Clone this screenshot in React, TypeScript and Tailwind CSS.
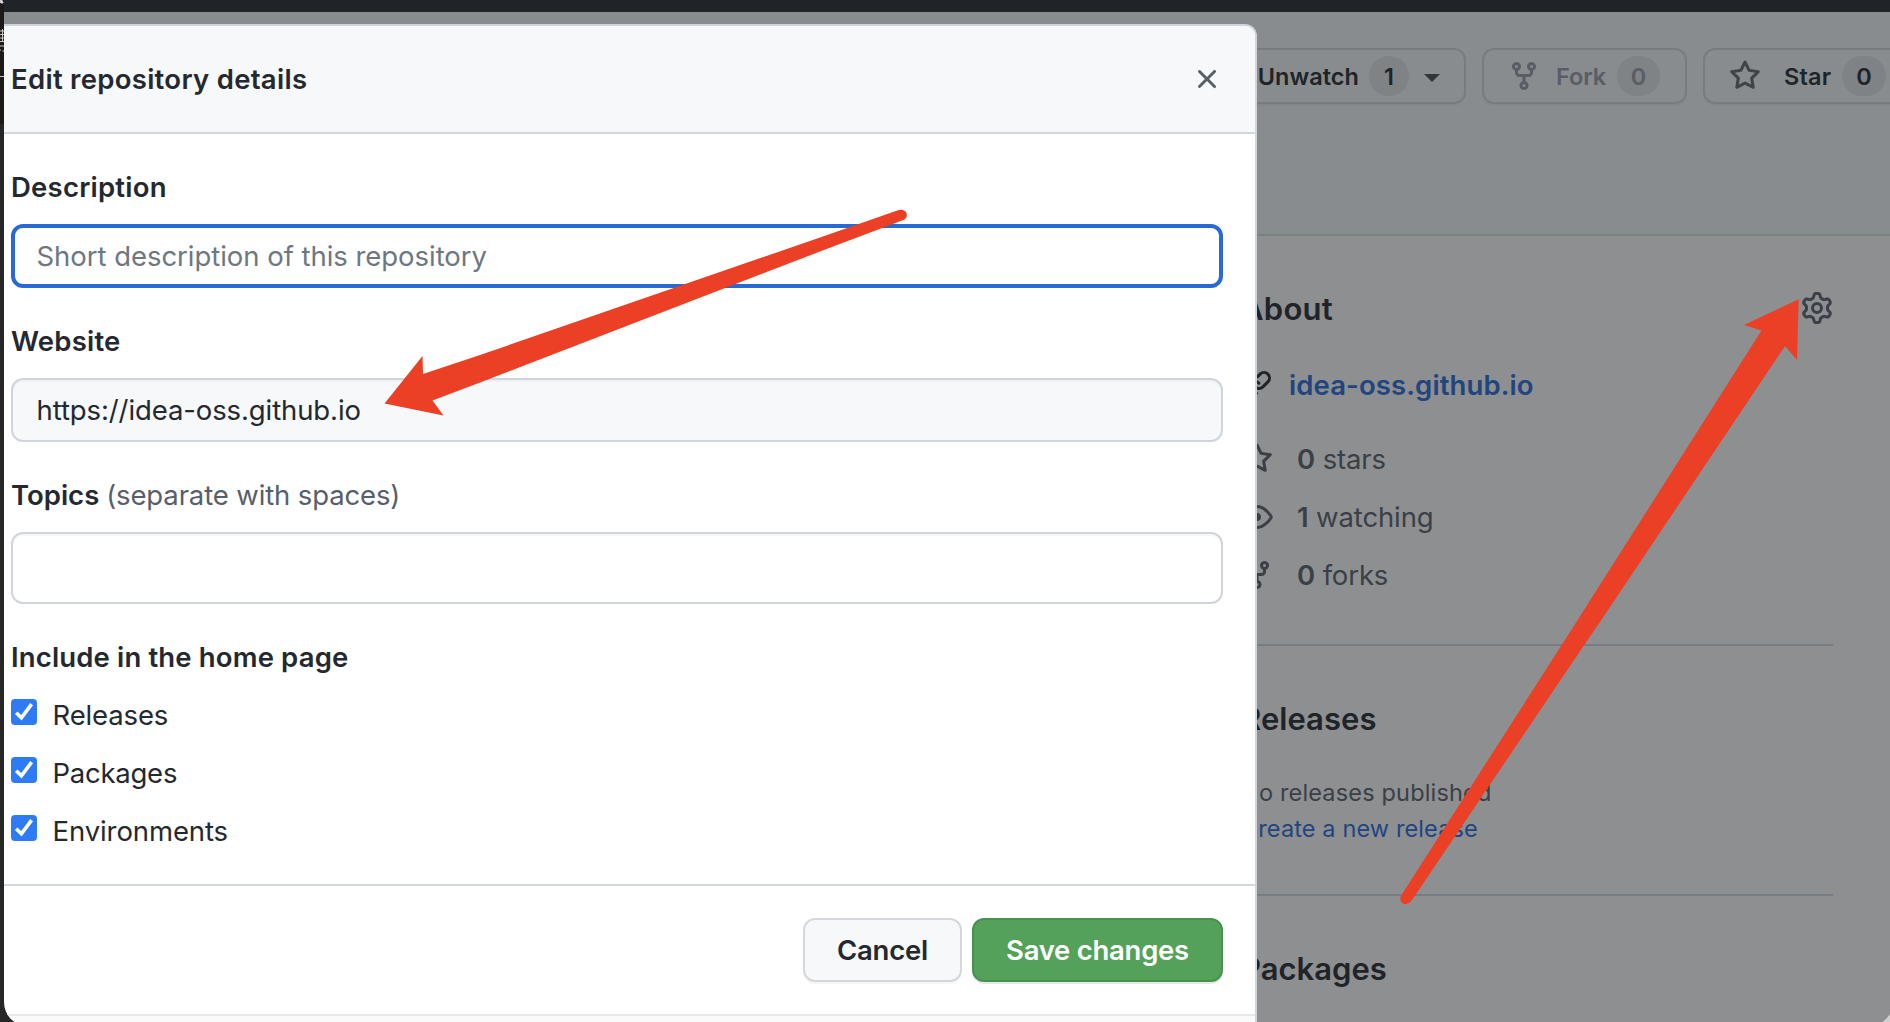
import type { ReactNode } from "react";

const ICONS = {
  x: "M3.72 3.72a.75.75 0 011.06 0L8 6.94l3.22-3.22a.75.75 0 111.06 1.06L9.06 8l3.22 3.22a.75.75 0 11-1.06 1.06L8 9.06l-3.22 3.22a.75.75 0 01-1.06-1.06L6.94 8 3.72 4.78a.75.75 0 010-1.06z",
  star: "M8 .25a.75.75 0 01.673.418l1.882 3.815 4.21.612a.75.75 0 01.416 1.279l-3.046 2.97.719 4.192a.75.75 0 01-1.088.791L8 12.347l-3.766 1.98a.75.75 0 01-1.088-.79l.72-4.194L.818 6.374a.75.75 0 01.416-1.28l4.21-.611L7.327.668A.75.75 0 018 .25zm0 2.445L6.615 5.5a.75.75 0 01-.564.41l-3.097.45 2.24 2.184a.75.75 0 01.216.664l-.528 3.084 2.769-1.456a.75.75 0 01.698 0l2.77 1.456-.53-3.084a.75.75 0 01.216-.664l2.24-2.183-3.096-.45a.75.75 0 01-.564-.41L8 2.694v.001z",
  fork: "M5 3.25a.75.75 0 11-1.5 0 .75.75 0 011.5 0zm0 2.122a2.25 2.25 0 10-1.5 0v.878A2.25 2.25 0 005.75 8.5h1.5v2.128a2.251 2.251 0 101.5 0V8.5h1.5a2.25 2.25 0 002.25-2.25v-.878a2.25 2.25 0 10-1.5 0v.878a.75.75 0 01-.75.75h-4.5A.75.75 0 015 6.25v-.878zm3.75 7.378a.75.75 0 11-1.5 0 .75.75 0 011.5 0zm3-8.75a.75.75 0 100-1.5.75.75 0 000 1.5z",
  eye: "M1.679 7.932c.412-.621 1.242-1.75 2.366-2.717C5.175 4.242 6.527 3.5 8 3.5c1.473 0 2.824.742 3.955 1.715 1.124.967 1.954 2.096 2.366 2.717a.119.119 0 010 .136c-.412.621-1.242 1.75-2.366 2.717C10.825 11.758 9.473 12.5 8 12.5c-1.473 0-2.824-.742-3.955-1.715C2.92 9.818 2.09 8.69 1.679 8.068a.119.119 0 010-.136zM8 2c-1.981 0-3.67.992-4.933 2.078C1.797 5.169.88 6.423.43 7.1a1.619 1.619 0 000 1.798c.45.678 1.367 1.932 2.637 3.024C4.329 13.008 6.019 14 8 14c1.981 0 3.67-.992 4.933-2.078 1.27-1.091 2.187-2.345 2.637-3.023a1.619 1.619 0 000-1.798c-.45-.678-1.367-1.932-2.637-3.023C11.671 2.992 9.981 2 8 2zm0 8a2 2 0 100-4 2 2 0 000 4z",
  link: "M7.775 3.275a.75.75 0 001.06 1.06l1.25-1.25a2 2 0 112.83 2.83l-2.5 2.5a2 2 0 01-2.83 0 .75.75 0 00-1.06 1.06 3.5 3.5 0 004.95 0l2.5-2.5a3.5 3.5 0 00-4.95-4.95l-1.25 1.25zm-4.69 9.64a2 2 0 010-2.83l2.5-2.5a2 2 0 012.83 0 .75.75 0 001.06-1.06 3.5 3.5 0 00-4.95 0l-2.5 2.5a3.5 3.5 0 004.95 4.95l1.25-1.25a.75.75 0 00-1.06-1.06l-1.25 1.25a2 2 0 01-2.83 0z",
  gear: "M7.429 1.525a6.593 6.593 0 011.142 0c.036.003.108.036.137.146l.289 1.105c.147.56.55.967.997 1.189.174.086.341.183.501.29.417.278.97.423 1.53.27l1.102-.303c.11-.03.175.016.195.046.219.31.41.641.573.989.014.031.022.11-.059.19l-.815.806c-.411.406-.562.957-.53 1.456a4.588 4.588 0 010 .582c-.032.499.119 1.05.53 1.456l.815.806c.08.08.073.159.059.19a6.494 6.494 0 01-.573.99c-.02.029-.086.074-.195.045l-1.103-.303c-.559-.153-1.112-.008-1.529.27-.16.107-.327.204-.5.29-.449.222-.851.628-.998 1.189l-.289 1.105c-.029.11-.101.143-.137.146a6.613 6.613 0 01-1.142 0c-.036-.003-.108-.037-.137-.146l-.289-1.105c-.147-.56-.55-.967-.997-1.189a4.502 4.502 0 01-.501-.29c-.417-.278-.97-.423-1.53-.27l-1.102.303c-.11.03-.175-.016-.195-.046a6.492 6.492 0 01-.573-.989c-.014-.031-.022-.11.059-.19l.815-.806c.411-.406.562-.957.53-1.456a4.587 4.587 0 010-.582c.032-.499-.119-1.05-.53-1.456l-.815-.806c-.08-.08-.073-.159-.059-.19a6.44 6.44 0 01.573-.99c.02-.029.086-.075.195-.045l1.103.303c.559.153 1.112.008 1.529-.27.16-.107.327-.204.5-.29.449-.222.851-.628.998-1.189l.289-1.105c.029-.11.101-.143.137-.146zM8 0c-.236 0-.47.01-.701.03-.743.065-1.29.615-1.458 1.261l-.29 1.106c-.017.066-.078.158-.211.224a5.994 5.994 0 00-.668.386c-.123.082-.233.09-.3.071L3.27 2.776c-.644-.177-1.392.02-1.82.63a7.977 7.977 0 00-.704 1.217c-.315.675-.111 1.422.363 1.891l.815.806c.05.048.098.147.088.294a6.084 6.084 0 000 .772c.01.147-.038.246-.088.294l-.815.806c-.474.469-.678 1.216-.363 1.891.2.428.436.835.704 1.218.428.609 1.176.806 1.82.63l1.103-.303c.066-.019.176-.011.299.071.213.143.436.272.668.386.133.066.194.158.212.224l.289 1.106c.169.646.715 1.196 1.458 1.26a8.094 8.094 0 001.402 0c.743-.064 1.29-.614 1.458-1.26l.29-1.106c.017-.066.078-.158.211-.224a5.98 5.98 0 00.668-.386c.123-.082.233-.09.3-.071l1.102.302c.644.177 1.392-.02 1.82-.63.268-.382.505-.789.704-1.217.315-.675.111-1.422-.364-1.891l-.814-.806c-.05-.048-.098-.147-.088-.294a6.1 6.1 0 000-.772c-.01-.147.039-.246.088-.294l.814-.806c.475-.469.679-1.216.364-1.891a7.992 7.992 0 00-.704-1.218c-.428-.609-1.176-.806-1.82-.63l-1.103.303c-.066.019-.176.011-.299-.071a5.991 5.991 0 00-.668-.386c-.133-.066-.194-.158-.212-.224L10.16 1.29C9.99.645 9.444.095 8.701.031A8.094 8.094 0 008 0zm1.5 8a1.5 1.5 0 11-3 0 1.5 1.5 0 013 0zM11 8a3 3 0 11-6 0 3 3 0 016 0z",
};

function Icon({ name, className = "" }: { name: keyof typeof ICONS; className?: string }) {
  return (
    <svg viewBox="0 0 16 16" className={`size-8 shrink-0 ${className}`} fill="currentColor" fillRule="evenodd" aria-hidden="true">
      <path d={ICONS[name]} />
    </svg>
  );
}

function RepoButton({ className, children }: { className: string; children: ReactNode }) {
  return (
    <button
      className={`flex h-14 shrink-0 items-center rounded-xl border-2 border-[#787c7e] text-[23.5px] leading-none font-semibold shadow-[0_2px_0_rgba(27,31,36,0.03)] ${className}`}
    >
      {children}
    </button>
  );
}

function Counter({ className, children }: { className: string; children: ReactNode }) {
  return (
    <span className={`flex h-10 shrink-0 items-center justify-center rounded-full bg-[#7f8385] pt-px ${className}`}>
      {children}
    </span>
  );
}

function RepoActions() {
  return (
    <div className="flex h-[224px] border-b-2 border-[#7a8082] bg-[#888c8e] pt-9 pl-[1100px]">
      <div className="flex w-[1000px] items-start gap-4 text-[#202428]">
        <RepoButton className="w-[362px] justify-end pr-6">
          <span className="pt-px tracking-[0.05px]">Unwatch</span>
          <Counter className="ml-2.5 w-10">1</Counter>
          <svg viewBox="0 0 16 8" className="mt-1 ml-[15px] h-2 w-4" aria-hidden="true">
            <path d="M0 0h16L8 8z" fill="#31363b" />
          </svg>
        </RepoButton>
        <RepoButton className="w-[205px] pl-6 text-[#595d66]">
          <Icon name="fork" />
          <span className="ml-4 pt-px tracking-[-0.1px]">Fork</span>
          <Counter className="ml-[11px] w-[43px]">0</Counter>
        </RepoButton>
        <RepoButton className="w-[280px] pl-6">
          <Icon name="star" className="text-[#3f444b]" />
          <span className="ml-[23px] pt-px tracking-[0.15px]">Star</span>
          <Counter className="ml-[11px] w-11">0</Counter>
        </RepoButton>
      </div>
    </div>
  );
}

function Stat({ icon, count, label }: { icon: keyof typeof ICONS; count: number; label: string }) {
  return (
    <div className="flex h-[58px] items-center text-[27.5px] tracking-[-0.13px]">
      <Icon name={icon} />
      <span className="ml-6 pt-0.5 whitespace-pre">
        <b className="font-semibold">{count}</b> {label}
      </span>
    </div>
  );
}

function Sidebar() {
  return (
    <aside className="ml-[1237px] w-[592px] text-[#3b4046]">
      <section className="border-b-2 border-[#777e83] pt-[49px] pb-10">
        <div className="flex h-12 items-center justify-between">
          <h2 className="text-[31px] font-semibold tracking-[0.25px] text-[#202428]">About</h2>
          <Icon name="gear" className="-mt-0.5" />
        </div>
        <div className="mt-[31px] mb-6 flex h-[42px] items-center">
          <Icon name="link" className="text-[#202428]" />
          <a className="ml-4 pt-0.5 text-[27.5px] font-semibold tracking-[0.1px] text-[#22457f]">idea-oss.github.io</a>
        </div>
        <Stat icon="star" count={0} label="stars" />
        <Stat icon="eye" count={1} label="watching" />
        <Stat icon="fork" count={0} label="forks" />
      </section>
      <section className="border-b-2 border-[#777e83] pt-[49px] pb-[47px]">
        <h2 className="h-12 text-[31px] leading-[48px] font-semibold tracking-[0.05px] text-[#202428]">Releases</h2>
        <p className="mt-8 text-[23.5px] leading-9 tracking-[0.17px]">No releases published</p>
        <a className="block text-[23.5px] leading-9 tracking-[0.12px] text-[#22457f]">Create a new release</a>
      </section>
      <section className="pt-[49px]">
        <h2 className="h-12 text-[31px] leading-[48px] font-semibold text-[#202428]">Packages</h2>
      </section>
    </aside>
  );
}

function CheckRow({ label, className }: { label: string; className: string }) {
  return (
    <label className="flex h-[58px] items-center gap-[15.5px]">
      <span className="-mt-1.5 flex size-[26px] items-center justify-center rounded-[4px] bg-[#2f7bf6]">
        <svg viewBox="0 0 26 26" className="size-[26px]" fill="none" aria-hidden="true">
          <path d="M5.2 13.8 10.4 18.8 20.6 5.2" stroke="#fff" strokeWidth="3.6" />
        </svg>
      </span>
      <span className={className}>{label}</span>
    </label>
  );
}

function Dialog() {
  return (
    <div className="absolute top-6 left-1 flex h-[1002px] w-[1253px] flex-col overflow-hidden rounded-tr-xl rounded-bl-[24px] border-t-2 border-r-2 border-[#d0d5dc] bg-white text-[27.5px] leading-[42px] text-[#24292f]">
      <header className="flex h-[108px] shrink-0 items-center justify-between border-b-2 border-[#d0d7de] bg-[#f6f8fa] pr-8 pl-[7px]">
        <h1 className="font-semibold tracking-[0.29px]">Edit repository details</h1>
        <Icon name="x" className="text-[#57606a]" />
      </header>

      <div className="flex h-[752px] shrink-0 flex-col border-b-2 border-[#d0d7de] pt-8 pr-8 pl-[7px]">
        <label className="font-semibold tracking-[0.22px]">Description</label>
        <div className="mt-4 flex h-16 items-center rounded-xl border-4 border-[#2869d3] pl-[21.5px] tracking-[-0.04px] text-[#6e7781]">
          Short description of this repository
        </div>
        <label className="mt-8 font-semibold tracking-[0.2px]">Website</label>
        <div className="mt-4 flex h-16 items-center rounded-xl border-2 border-[#d0d5dc] bg-[#f6f8fa] pl-[23.5px] tracking-[-0.1px] shadow-[inset_0_2px_0_rgba(208,215,222,0.2)]">
          https://idea-oss.github.io
        </div>
        <label className="mt-8 font-semibold">
          Topics <span className="font-normal tracking-[-0.13px] text-[#57606a]">(separate with spaces)</span>
        </label>
        <div className="mt-4 h-[72px] rounded-xl border-2 border-[#d0d5dc] shadow-[inset_0_2px_0_rgba(208,215,222,0.2)]" />
        <h2 className="mt-8 mb-2 font-semibold tracking-[0.15px]">Include in the home page</h2>
        <CheckRow label="Releases" className="tracking-[-0.13px]" />
        <CheckRow label="Packages" className="tracking-[-0.25px]" />
        <CheckRow label="Environments" className="tracking-[-0.1px]" />
      </div>

      <footer className="flex h-32 shrink-0 items-center justify-end gap-2.5 pr-8">
        <button className="h-16 w-[159px] rounded-xl border-2 border-[#d5d8da] bg-[#f6f8fa] font-semibold tracking-[-0.2px] shadow-[0_2px_0_rgba(27,31,36,0.04)]">
          Cancel
        </button>
        <button className="h-16 w-[251px] rounded-xl border-2 border-[#4a9150] bg-[#54a159] font-semibold tracking-[-0.27px] text-white shadow-[0_2px_0_rgba(27,31,36,0.1)]">
          Save changes
        </button>
      </footer>
      <div className="grow border-t-2 border-[#e8e8e8] bg-[#fafafa]" />
    </div>
  );
}

function Arrows() {
  return (
    <svg viewBox="0 0 1890 1022" className="pointer-events-none absolute inset-0 size-full" fill="#eb4025" aria-hidden="true">
      <path d="M384.5 403.5 422.5 356 423 374 480 355 820 237.5 898 210.3C904 208 909 213 906 218Q905 219.5 902 220.5L820 251.5 480 382.5 432.5 400.5 443.5 415.5Z" />
      <path d="M1798.7 299.3 1797 360 1785 346 1608 610 1570 666 1412 900C1409 904.5 1404 905.5 1401.5 902Q1399 899 1401.5 895L1570 632 1584 610 1761.5 330.5 1744 325Z" />
    </svg>
  );
}

export default function App() {
  return (
    <div className="relative h-[1022px] w-[1890px] overflow-hidden bg-linear-to-r from-[#262626] from-50% to-[#cfcfcf] to-50% pl-1 font-[Inter,sans-serif]">
      <svg viewBox="0 0 4 124" className="absolute top-0 left-0 h-[124px] w-1" aria-hidden="true">
        <path d="M0 0h4v124H0z" fill="#1e1a18" />
        <path d="M0 0h2v1l1 1v1H1L0 2zM0 31h4M2.5 29v13M0 34.5h4M0 38h4M0 41.5h4M0 46h4M0 50h1M2.5 51h1.5M0 76.5h4" fill="#d9d7d5" stroke="#c9c7c5" strokeWidth="1" />
      </svg>
      <div className="flex h-[1026px] w-[1889px] flex-col overflow-hidden rounded-br-[24px] rounded-bl-[40px] bg-[#8d8f91]">
        <div className="h-3 shrink-0 bg-[#202428]" />
        <RepoActions />
        <Sidebar />
      </div>
      <Dialog />
      <Arrows />
    </div>
  );
}
